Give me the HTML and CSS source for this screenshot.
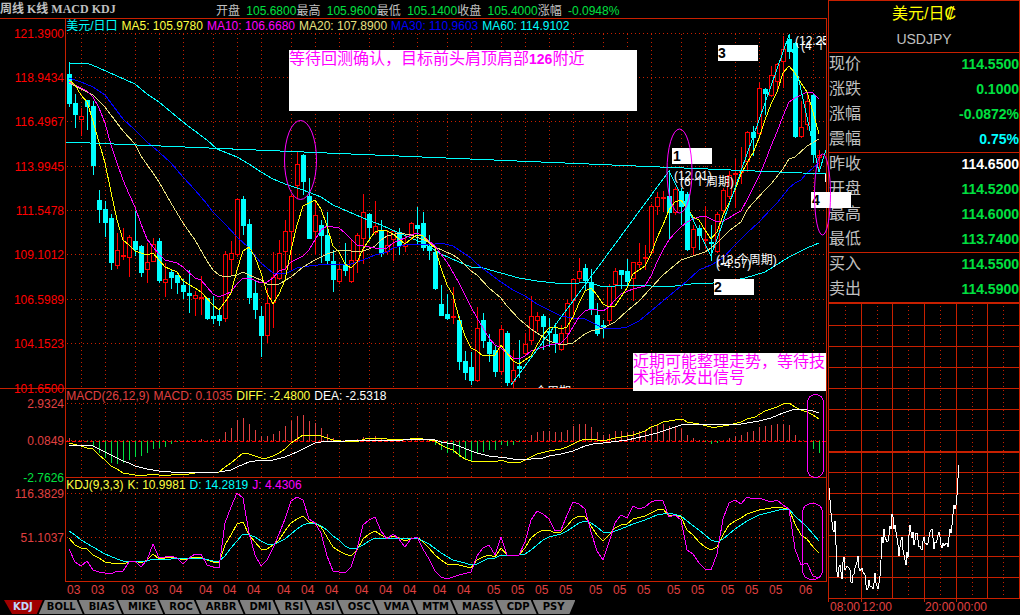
FILE: index.html
```html
<!DOCTYPE html>
<html lang="zh-CN">
<head>
<meta charset="utf-8">
<title>美元/日元 周线</title>
<link rel="stylesheet" href="styles.css">
</head>
<body>
<div class="terminal">
  <main class="charts">
    <header class="topbar">
      <h1 class="title">周线 K线 MACD KDJ</h1>
      <ul class="summary">
        <li>开盘 <b>105.6800</b></li>
        <li>最高 <b>105.9600</b></li>
        <li>最低 <b>105.1400</b></li>
        <li>收盘 <b>105.4000</b></li>
        <li>涨幅 <b>-0.0948%</b></li>
      </ul>
    </header>

    <section class="panel">
      <svg class="plot" viewBox="0 19 827 370" id="price">
        <defs><clipPath id="area"><rect x="66" y="19" width="760" height="369"/></clipPath></defs>
        <g class="grid" data-top="34" data-bottom="388" data-rows="33.5 77.5 121.5 166.5 210.5 254.5 299.5 343.5"></g>
        <path class="frame" d="M65.5 19V389M0 388.5H827M826.5 19V389"/>
        <g class="axis">
          <text x="64" y="38">121.3900</text><text x="64" y="82">118.9434</text>
          <text x="64" y="126">116.4967</text><text x="64" y="171">113.9945</text>
          <text x="64" y="215">111.5478</text><text x="64" y="259">109.1012</text>
          <text x="64" y="304">106.5989</text><text x="64" y="348">104.1523</text>
          <text x="64" y="393">101.6500</text>
        </g>
        <g class="series" id="candles"></g>
        <g class="series" id="averages"></g>
        <path class="trend" d="M66 142L826 174"/>
        <path class="line cyan" d="M511 385L669 171L711 256L789 35L819 172L826 150"/>
        <g class="mark" clip-path="url(#area)">
          <text x="674" y="180">(12.01)</text><text x="680" y="186">(6 个周期)</text>
          <text x="716" y="264">(13 个周期)</text><text x="716" y="268">(-4.57)</text>
          <text x="795" y="45">(12.25)</text><text x="801" y="50">(4 个周期)</text>
          <text x="535" y="396">个周期</text>
        </g>
        <path class="tick" d="M825.5 174V182"/>
        <g class="note">
          <rect x="289" y="50" width="348" height="61"/>
          <text x="289" y="64">等待回测确认，目标前头肩顶肩部<tspan class="strong">126</tspan>附近</text>
          <rect x="633" y="353" width="193" height="38"/>
          <text x="633" y="367">近期可能整理走势，等待技</text>
          <text x="633" y="383">术指标发出信号</text>
        </g>
        <g class="badge">
          <rect x="672" y="148" width="40" height="16"/><text x="673" y="161">1</text>
          <rect x="714" y="279" width="40" height="16"/><text x="714" y="292">2</text>
          <rect x="718" y="45" width="40" height="16"/><text x="718" y="58">3</text>
          <rect x="811" y="192" width="40" height="16"/><text x="812" y="205">4</text>
        </g>
        <g class="ring">
          <ellipse cx="300.5" cy="160" rx="16" ry="39.5"/>
          <ellipse cx="679.5" cy="171" rx="12.5" ry="42"/>
          <ellipse cx="822.5" cy="194.5" rx="8" ry="40.5"/>
        </g>
      </svg>
      <p class="legend">
        <span class="t-cyan">美元/日口</span><span class="t-yellow">MA5: 105.9780</span><span class="t-magenta">MA10: 106.6680</span><span class="t-khaki">MA20: 107.8900</span><span class="t-blue">MA30: 110.9603</span><span class="t-cyan">MA60: 114.9102</span>
      </p>
    </section>

    <section class="panel">
      <svg class="plot" viewBox="0 389 827 89">
        <g class="grid" data-top="404" data-bottom="477" data-rows="403.5 440.5"></g>
        <path class="frame" d="M65.5 389V478M65 477.5H827M826.5 389V478"/>
        <g class="axis soft">
          <text x="64" y="408">2.9324</text><text x="64" y="445">0.0849</text>
          <text x="64" y="482" class="down">-2.7626</text>
        </g>
        <path class="zero" d="M66 441H826"/>
        <g class="series" id="bars"></g>
        <g class="series" id="macd"></g>
        <g class="ring"><rect x="807.5" y="394.5" width="16" height="83" rx="8"/></g>
      </svg>
      <p class="legend">
        <span class="t-red">MACD(26,12,9)</span><span class="t-red">MACD: 0.1035</span><span class="t-yellow">DIFF: -2.4800</span><span class="t-white">DEA: -2.5318</span>
      </p>
    </section>

    <section class="panel">
      <svg class="plot" viewBox="0 478 827 121">
        <g class="grid" data-top="494" data-bottom="581" data-rows="493.5 537.5"></g>
        <path class="frame" d="M65.5 478V582M65 581.5H827M826.5 478V582"/>
        <g class="axis soft">
          <text x="64" y="498">116.3829</text><text x="64" y="542">51.1037</text>
        </g>
        <g class="series" id="kdj"></g>
        <g class="months" id="months"></g>
        <g class="ring"><rect x="802.5" y="503.5" width="20" height="76" rx="9"/></g>
      </svg>
      <p class="legend">
        <span class="t-yellow">KDJ(9,3,3)</span><span class="t-yellow">K: 10.9981</span><span class="t-cyan">D: 14.2819</span><span class="t-magenta">J: 4.4306</span>
      </p>
    </section>

    <nav class="tabs">
      <button class="tab active">KDJ</button><button class="tab first">BOLL</button><button class="tab">BIAS</button><button class="tab">MIKE</button><button class="tab">ROC</button><button class="tab">ARBR</button><button class="tab">DMI</button><button class="tab">RSI</button><button class="tab">ASI</button><button class="tab">OSC</button><button class="tab">VMA</button><button class="tab">MTM</button><button class="tab">MASS</button><button class="tab">CDP</button><button class="tab last">PSY</button>
    </nav>
  </main>

  <aside class="quote">
    <header class="symbol">
      <h2 class="name">美元/日₡</h2>
      <p class="code">USDJPY</p>
    </header>
    <dl class="group">
      <div class="row"><dt>现价</dt><dd>114.5500</dd></div>
      <div class="row"><dt>涨跌</dt><dd>0.1000</dd></div>
      <div class="row"><dt>涨幅</dt><dd>-0.0872%</dd></div>
      <div class="row"><dt>震幅</dt><dd class="t-cyan">0.75%</dd></div>
    </dl>
    <dl class="group">
      <div class="row"><dt>昨收</dt><dd class="t-white">114.6500</dd></div>
      <div class="row"><dt>开盘</dt><dd>114.5200</dd></div>
      <div class="row"><dt>最高</dt><dd>114.6000</dd></div>
      <div class="row"><dt>最低</dt><dd>113.7400</dd></div>
    </dl>
    <dl class="group">
      <div class="row"><dt>买入</dt><dd>114.5500</dd></div>
      <div class="row"><dt>卖出</dt><dd>114.5900</dd></div>
    </dl>
    <svg class="plot" viewBox="828 302 192 313">
      <path class="frame" d="M828 325.5H1019M828 346.5H1019M828 367.5H1019M828 388.5H1019M828 409.5H1019M828 430.5H1019M828 472.5H1019M828 493.5H1019M828 514.5H1019M828 535.5H1019M828 556.5H1019M828 577.5H1019M828 598.5H1020"/>
      <path class="frame" d="M828.5 302V602M861.5 302V602M892.5 302V598M924.5 302V602M956.5 302V602M987.5 302V598M1019.5 302V599"/>
      <path class="dots" d="M845.5 306V598M877.5 306V598M908.5 306V598M940.5 306V598M972.5 306V598M1003.5 306V598"/>
      <path class="frame heavy" d="M828 303H1020M828 451.5H1020"/>
      <polyline class="line white" id="intraday"/>
      <g class="months">
        <text x="830" y="611">08:00</text><text x="862" y="611">12:00</text>
        <text x="925" y="611">20:00</text><text x="957" y="611">00:00</text>
      </g>
    </svg>
  </aside>
</div>
<script src="chart.js"></script>
</body>
</html>
```
FILE: styles.css
```css
* { box-sizing: border-box; }
body {
  margin: 0;
  background: #000;
  color: #c0c0c0;
  font: 12px/16px "Liberation Sans", "Noto Sans CJK SC", sans-serif;
}
h1, h2, p, ul, dl, dd { margin: 0; padding: 0; }

.terminal {
  display: grid;
  grid-template-columns: minmax(0, 827fr) minmax(0, 193fr);
  background: #000;
}
.charts { position: relative; z-index: 1; min-width: 0; }
.topbar {
  display: grid;
  grid-template-columns: 216px 1fr;
  height: 19px;
  border-bottom: 1px solid #c82000;
}
.title {
  font: bold 12px/18px "Liberation Serif", "Noto Sans CJK SC", serif;
  white-space: nowrap;
}
.summary {
  display: flex;
  list-style: none;
  line-height: 22px;
  white-space: nowrap;
}
.summary b { margin-left: 3px; font-weight: normal; color: #00e040; }

.panel { display: grid; }
.panel > * { grid-area: 1 / 1; min-width: 0; }
.plot { display: block; width: 100%; height: auto; overflow: visible; }
.legend {
  display: flex;
  gap: 4px;
  height: 15px;
  padding-left: 8%;
  line-height: 14px;
  white-space: nowrap;
}

.t-cyan, .row .t-cyan { color: #00ffff; }
.t-white, .row .t-white { color: #fff; }
.t-yellow { color: #ffff40; }
.t-magenta { color: #ff00ff; }
.t-khaki { color: #e8e080; }
.t-blue { color: #0000ff; }
.t-red { color: #e04040; }

.plot path, .plot polyline, .plot rect, .plot line { shape-rendering: crispEdges; }
.frame { fill: none; stroke: #c82000; }
.heavy { stroke-width: 2; }
.dots, .grid path { fill: none; stroke: #c82000; stroke-dasharray: 1 3; }
.axis { fill: #ff0000; text-anchor: end; }
.soft, .months { fill: #e04040; }
.down { fill: #00e040; }
.line { fill: none; stroke-width: 1; }
.trend { fill: none; stroke: #00ffff; }
.tick { stroke: #fff; }
.zero { stroke: #ff0000; stroke-width: 1; stroke-dasharray: 4 2; }
.yellow { stroke: #ffff00; }
.magenta { stroke: #ff00ff; }
.khaki { stroke: #e8e080; }
.blue { stroke: #0000ff; }
.cyan { stroke: #00ffff; }
.white { stroke: #fff; }
.up-bar { stroke: #e04040; }
.down-bar { stroke: #00e040; }
.rise { stroke: #ff0000; fill: #000; }
.fall { stroke: #00ffff; fill: #00ffff; }
.mark { fill: #fff; }
.note rect, .badge rect { fill: #fff; }
.note { fill: #ff00ff; font-size: 16px; }
.strong { font-size: 14px; font-weight: bold; }
.badge { fill: #000; font-size: 14px; font-weight: bold; }
.ring { fill: none; stroke: #ff00ff; }

.tabs { display: flex; padding: 1px 0 1px 4px; }
.tab {
  height: 14px;
  margin: 0 0 0 -4px;
  padding: 0 7px 0 10px;
  border: 0;
  background: #808080;
  color: #000;
  font: bold 10px/14px "DejaVu Sans", sans-serif;
  clip-path: polygon(0 0, calc(100% - 6px) 0, 100% 100%, 6px 100%);
}
.tab.active {
  margin-left: 0;
  padding: 0 10px 0 9px;
  background: #a00000;
  color: #c0d8ff;
  clip-path: polygon(0 0, 100% 0, calc(100% - 6px) 100%, 8px 100%);
}
.tab.first {
  padding-left: 8px;
  clip-path: polygon(6px 0, calc(100% - 6px) 0, 100% 100%, 0 100%);
}
.tab.last {
  padding-right: 11px;
  clip-path: polygon(0 0, 100% 0, calc(100% - 6px) 100%, 6px 100%);
}

.quote { padding-left: 1px; min-width: 0; }
.symbol, .group {
  border: 1px solid #c82000;
  border-bottom: 0;
}
.symbol { height: 52px; text-align: center; }
.name { color: #ffff00; font-size: 16px; font-weight: normal; line-height: 26px; }
.code { font-size: 14px; line-height: 24px; }
.row { display: flex; justify-content: space-between; height: 25px; line-height: 22px; }
.group { height: 100px; }
.group:last-of-type { height: 50px; }
.row dt { font-size: 16px; }
.row dd { color: #00e040; font-size: 14px; font-weight: bold; }
```
FILE: chart.js
```js
const NS = "http://www.w3.org/2000/svg";
const add = (parent, tag, attrs, text) => {
  const node = document.createElementNS(NS, tag);
  for (const key in attrs) node.setAttribute(key, attrs[key]);
  if (text) node.textContent = text;
  parent.appendChild(node);
};
const byId = (id) => document.getElementById(id);
const columnX = (i) => 69.5 + 6 * i;

const months = [81, 105, 135, 159, 183, 213, 237, 261, 291, 315, 339, 369, 393, 417, 447, 471,
  501, 525, 549, 573, 603, 627, 651, 681, 705, 735, 759, 783, 813];

document.querySelectorAll(".grid").forEach((grid) => {
  const { top, bottom, rows } = grid.dataset;
  const d = rows.split(" ").map((y) => `M67 ${y}H826`).join("") +
    months.map((x) => `M${x + 0.5} ${top}V${bottom}`).join("");
  add(grid, "path", { d });
});
months.forEach((x, i) => {
  const name = i < 4 ? "03" : i < 16 ? "04" : i < 28 ? "05" : "06";
  add(byId("months"), "text", { x: x - 14, y: 594 }, name);
});

// high, body top, body bottom, low, direction
const candles = `62 74 104 107 d,94 103 115 128 d,108 116 120 136 r,100 100 107 130 d,101 106 166 175 d,190 200 210 223 d,
201 209 223 237 d,214 218 263 270 d,233 250 266 269 r,228 255 257 260 r,235 237 258 277 r,211 241 250 256 d,245 246 273 277 d,
243 262 270 283 r,238 244 262 262 r,238 241 281 283 d,263 279 283 297 r,269 272 278 289 d,275 275 283 294 d,279 285 292 299 d,
270 293 296 313 d,291 295 299 316 r,276 297 298 315 r,298 298 319 320 d,296 316 319 324 d,308 315 321 326 d,251 254 319 322 r,
241 253 260 275 r,198 199 255 257 r,196 199 226 235 d,219 224 298 304 d,281 293 310 319 d,306 316 336 357 d,288 303 336 343 r,
252 277 303 328 r,240 253 279 280 r,220 231 252 270 r,195 196 232 270 r,152 164 186 199 r,154 155 182 195 d,178 196 239 239 d,
203 215 232 255 r,220 225 236 263 d,212 235 261 264 d,250 261 280 292 d,263 269 282 284 r,243 265 271 276 d,240 260 282 283 r,
233 235 261 273 r,194 212 239 264 r,213 214 228 241 d,201 226 233 235 r,220 230 254 257 d,230 245 252 255 r,230 231 240 261 r,
228 232 246 255 d,234 244 247 252 r,222 223 238 240 r,207 225 229 245 d,212 223 248 251 d,235 246 251 260 d,248 252 289 290 d,
285 304 316 316 d,294 314 319 320 d,287 316 318 324 r,316 320 362 370 d,351 361 373 380 d,352 367 381 385 d,307 328 381 382 r,
313 320 341 348 d,334 342 354 362 d,345 350 372 377 d,325 329 372 375 r,331 333 383 386 d,350 370 382 388 r,340 366 369 378 d,
333 344 354 355 r,296 316 341 345 r,312 316 321 332 r,314 316 327 350 d,318 331 332 347 d,323 334 343 353 d,325 333 350 351 r,
300 303 334 345 r,278 279 301 320 r,258 271 279 282 r,264 268 281 290 d,269 282 310 315 d,303 315 334 336 d,320 325 328 338 d,
284 286 321 325 r,268 271 285 301 r,270 270 275 289 d,259 271 282 285 d,262 262 279 301 r,243 262 265 268 r,245 257 259 270 r,
204 206 253 255 r,192 197 207 215 r,191 197 199 212 r,170 196 213 240 d,187 189 213 215 r,188 191 207 225 d,192 194 250 251 d,
225 229 248 255 r,225 228 236 250 d,206 239 240 249 r,225 242 244 261 d,212 214 252 253 r,188 190 211 215 r,171 175 197 199 r,
159 173 174 208 r,147 171 173 184 r,131 132 162 172 r,126 132 138 156 d,83 88 134 136 r,88 89 94 115 d,66 75 96 97 r,
63 64 82 92 r,36 49 62 88 r,34 39 52 59 d,42 43 137 138 d,101 127 137 138 r,92 101 125 130 r,93 95 155 163 d,150 155 158 170 r`;
candles.split(",").forEach((entry, i) => {
  const [high, top, bottom, low, dir] = entry.trim().split(" ");
  const x = columnX(i);
  const group = byId("candles");
  const cls = dir === "r" ? "rise" : "fall";
  add(group, "path", { class: cls, d: `M${x} ${high}V${low}` });
  add(group, "rect", { class: cls, x: x - 2, y: +top + 0.5, width: 4, height: Math.max(1, bottom - top - 1) });
});

const drawLine = (id, color, points) =>
  add(byId(id), "polyline", { class: `line ${color}`, points });

drawLine("averages", "cyan", "69,63 87,63 99,68 135,84 147,94 159,102 171,112 183,122 195,131 207,140 217,149 237,157 249,164 261,172 273,179 285,184 303,190 321,197 333,205 340,208 363,218 381,225 399,233 423,243 441,254 459,262 471,267 483,268 501,273 519,278 537,281 555,283 573,284 585,282 591,283 603,287 615,286 627,285 651,286 675,286 699,283 713,283 729,281 745,278 765,272 789,257 807,248 819,243");
drawLine("averages", "blue", "69,78 81,82 93,87 105,95 117,111 123,119 135,130 147,142 159,152 171,163 183,177 195,190 207,204 213,212 225,224 237,237 249,248 261,263 273,273 285,274 297,268 309,266 327,264 339,265 351,264 363,260 375,255 387,252 393,248 405,245 411,244 423,245 435,244 441,243 453,246 459,250 471,258 477,264 489,273 501,282 513,290 525,296 537,304 549,310 561,316 573,318 585,319 591,322 603,328 615,329 627,327 639,321 651,311 663,301 675,291 687,281 699,270 711,265 723,258 735,245 747,233 759,222 771,209 777,203 789,188 795,183 801,180 807,173 819,163");
drawLine("averages", "khaki", "69,83 81,89 93,95 105,107 111,115 123,131 135,144 141,156 153,173 159,182 171,203 183,223 195,240 207,261 213,270 219,275 225,277 237,275 243,272 249,275 261,280 267,284 273,285 279,284 291,277 303,267 315,260 327,254 339,250 351,251 363,251 369,249 375,246 381,240 387,236 399,233 411,235 429,242 435,247 453,255 459,259 471,271 477,275 489,288 501,298 507,306 519,319 531,329 543,337 549,341 561,345 573,343 585,334 591,331 603,328 615,322 627,311 639,301 651,288 663,275 675,265 681,260 693,256 705,252 711,248 717,243 729,231 741,222 747,210 753,203 765,190 771,184 783,169 789,159 795,157 807,146 819,139");
drawLine("averages", "magenta", "69,82 81,88 87,91 93,97 99,108 105,123 111,145 117,163 123,180 129,194 135,207 141,224 147,239 153,247 159,254 165,260 177,263 183,267 195,278 201,280 213,294 219,297 231,292 237,284 243,278 249,278 261,283 267,282 273,278 279,271 285,269 291,262 303,256 309,250 315,240 321,230 327,226 339,228 345,233 351,239 357,245 369,247 381,249 387,248 393,243 405,238 411,235 417,233 423,236 435,246 447,262 459,283 471,307 477,318 489,338 495,345 501,348 507,353 513,358 519,359 525,356 531,351 537,349 549,345 561,343 567,337 573,327 579,317 585,311 591,309 603,311 609,307 615,300 621,294 633,289 645,286 651,276 657,262 663,250 669,240 675,233 681,227 687,222 693,219 699,217 705,216 711,219 717,222 723,221 729,218 735,214 741,211 747,200 753,188 759,176 765,162 771,146 777,132 783,116 789,102 795,98 801,95 807,92 813,93 819,99");
drawLine("averages", "yellow", "69,80 75,85 81,95 87,102 93,121 99,142 105,163 111,192 117,220 123,240 129,245 135,251 147,255 153,253 165,267 177,272 183,281 195,288 201,292 213,305 219,310 225,302 231,293 237,270 243,251 249,247 255,257 261,273 267,293 273,304 279,294 285,280 291,250 297,225 303,206 309,203 315,200 321,209 327,226 333,246 339,252 345,264 351,268 357,262 363,249 369,240 375,232 381,230 387,231 393,234 399,239 405,244 411,239 417,235 423,236 429,243 435,248 441,268 447,285 453,295 459,318 465,336 471,348 477,351 483,356 489,355 495,355 501,345 507,353 513,361 519,364 525,360 531,356 537,345 543,335 549,328 555,327 561,329 567,327 573,317 579,303 585,291 591,288 597,295 603,304 609,307 615,306 621,297 627,288 633,274 639,270 645,266 651,254 657,238 663,225 669,210 675,202 681,200 687,208 693,217 699,220 705,230 711,239 717,232 723,215 729,203 735,190 741,174 747,163 753,153 759,138 765,120 771,104 777,92 783,73 789,66 795,73 801,83 807,92 813,112 819,134");

const barEnds = [438, 441, 441, 442, 446, 453, 458, 463, 464, 463, 460, 457, 456, 453, 449, 448, 447, 444, 442, 441, 441, 441,
  439, 441, 441, 439, 432, 428, 420, 418, 424, 430, 436, 436, 434, 431, 426, 421, 416, 415, 421, 423, 428, 434, 438, 441, 441,
  441, 439, 437, 438, 436, 438, 441, 441, 441, 441, 439, 441, 441, 441, 445, 450, 453, 453, 457, 460, 461, 454, 452, 450, 450,
  445, 446, 445, 442, 440, 435, 432, 431, 431, 432, 432, 430, 426, 424, 424, 427, 432, 435, 434, 431, 431, 432, 431, 431, 431,
  427, 424, 424, 426, 426, 429, 435, 438, 440, 442, 444, 443, 441, 438, 436, 435, 432, 431, 427, 426, 425, 424, 424, 425, 435,
  441, 441, 449, 453];
barEnds.forEach((y, i) => {
  if (y !== 441) add(byId("bars"), "path", { class: y < 441 ? "up-bar" : "down-bar", d: `M${columnX(i)} 441V${y}` });
});

drawLine("macd", "yellow", "69,443 81,446 87,448 93,449 99,455 105,460 111,466 117,469 123,473 135,475 147,475 153,474 159,475 171,475 177,474 189,474 201,472 219,472 225,467 231,463 237,458 243,453 249,454 255,456 261,458 267,458 273,456 279,453 285,449 291,443 297,439 303,435 309,436 315,435 321,436 327,438 333,440 341,441 353,442 359,441 365,439 375,438 387,439 403,440 417,438 429,440 435,441 441,445 447,448 453,450 459,455 465,459 471,461 477,461 495,462 501,460 507,462 521,462 527,459 531,457 537,454 549,451 561,449 567,447 573,444 579,441 585,439 597,440 603,441 615,438 621,437 633,435 645,431 651,427 657,425 663,422 675,420 683,419 687,422 699,424 711,427 717,427 723,426 729,425 741,422 747,419 755,417 765,411 777,407 783,404 789,403 795,407 801,410 807,412 813,415 819,419");
drawLine("macd", "white", "69,445 87,445 93,446 99,449 105,452 111,455 117,458 123,461 129,463 135,466 147,469 159,471 171,472 183,473 219,472 231,470 237,467 249,462 261,460 273,460 285,457 297,452 309,446 315,443 321,442 333,441 345,441 363,440 387,440 403,440 417,439 429,439 435,440 441,442 453,444 459,446 471,451 477,453 489,456 507,458 519,460 531,459 543,458 549,456 561,454 573,451 585,446 597,443 603,443 627,440 645,436 657,433 669,429 681,425 699,424 723,425 741,424 759,421 771,418 783,413 795,409 807,410 813,411 819,413");

drawLine("kdj", "yellow", "69,538 75,545 81,548 87,549 93,555 99,558 105,562 111,563 123,564 129,562 135,561 141,563 147,560 153,554 159,559 171,557 177,558 183,560 195,557 201,557 207,560 213,562 219,563 225,545 231,535 237,524 243,522 249,535 255,542 261,549 267,549 273,545 279,540 285,531 291,523 297,519 303,516 309,522 315,523 321,527 327,537 333,547 339,551 345,554 351,556 357,550 363,539 369,534 375,531 381,535 387,538 393,536 399,538 405,541 417,537 423,542 429,548 435,555 441,560 447,564 459,565 471,568 477,560 483,557 489,555 495,557 501,548 507,555 513,556 519,555 525,548 531,538 537,533 543,530 549,530 555,533 561,532 567,526 573,519 579,516 585,517 591,526 597,535 603,541 609,535 615,528 621,525 627,524 633,519 645,516 651,513 657,510 663,509 669,516 675,515 681,517 687,530 693,535 699,542 705,547 711,550 717,547 723,535 729,525 735,521 741,518 747,514 759,510 771,508 777,507 789,509 795,524 801,535 807,539 813,547 819,553");
drawLine("kdj", "cyan", "69,531 75,535 81,540 93,547 105,554 117,559 123,561 135,561 141,562 147,561 153,559 171,559 177,558 189,559 201,558 213,561 219,561 225,556 231,548 237,541 243,534 249,535 255,537 261,541 267,544 273,545 279,542 285,539 291,534 297,529 303,525 309,523 315,523 321,526 327,530 333,536 339,540 345,546 351,549 357,548 363,545 369,541 375,538 399,538 417,538 429,544 441,553 453,560 465,563 471,565 477,564 483,561 489,558 495,558 501,555 519,555 525,554 531,550 537,545 543,540 549,537 561,534 567,531 573,527 579,523 585,521 591,523 597,527 603,532 609,533 621,529 633,524 645,520 657,515 669,513 681,516 687,521 699,530 711,540 717,542 723,539 735,529 747,521 759,515 771,512 783,509 789,509 795,516 807,527 819,541");
drawLine("kdj", "magenta", "69,549 75,562 81,566 87,561 93,570 99,572 111,574 117,571 123,571 129,562 135,561 141,567 147,560 153,544 159,558 171,556 177,558 183,564 189,558 195,554 201,554 207,565 213,567 219,568 225,523 231,507 237,493 243,498 249,533 255,555 261,566 267,560 273,548 279,534 285,519 291,501 297,497 303,500 309,519 315,523 321,533 327,556 333,571 339,572 345,573 351,567 357,549 363,525 369,520 375,517 381,531 387,539 393,534 399,539 405,547 411,539 417,537 423,549 429,559 435,571 441,577 447,579 459,575 471,572 477,556 483,548 489,545 495,555 501,537 507,555 513,556 519,555 525,542 531,520 537,511 543,514 549,519 555,531 561,530 567,515 573,502 579,504 585,509 591,532 597,551 603,560 609,542 615,523 621,515 627,518 633,506 639,509 645,507 651,502 657,500 663,501 669,517 675,515 681,520 687,550 693,554 699,563 705,569 711,570 717,554 723,519 729,503 735,500 741,504 747,497 753,499 759,498 771,502 777,500 783,505 789,509 795,549 801,565 807,563 813,576 819,578");

byId("intraday").setAttribute("points", "829,488 830,500 831,513 833,530 834,532 835,521 836,545 837,572 838,577 839,567 840,565 841,572 842,579 843,562 844,557 845,570 847,566 849,568 850,570 851,582 852,583 853,575 854,574 855,568 857,562 858,556 859,568 860,571 862,568 863,572 865,575 866,585 867,590 868,588 869,580 870,586 872,587 873,589 874,583 875,573 876,583 877,586 878,589 879,583 880,576 881,560 882,537 883,543 884,529 885,537 887,542 888,541 889,535 890,526 891,529 892,514 893,517 894,529 895,525 896,532 897,538 898,545 899,556 900,547 901,540 902,537 903,550 904,555 905,560 906,565 907,552 908,558 909,535 910,525 911,532 912,538 913,532 914,545 915,540 916,533 917,533 918,540 919,547 920,546 921,549 922,550 923,541 924,537 925,543 926,543 927,545 928,543 929,537 930,532 931,530 932,529 933,538 934,549 935,542 936,543 937,540 938,535 939,532 940,537 941,545 942,548 943,543 944,546 946,543 947,543 948,547 949,537 950,529 951,533 952,525 953,514 954,505 955,509 956,505 957,495 958,478 959,465");
```
